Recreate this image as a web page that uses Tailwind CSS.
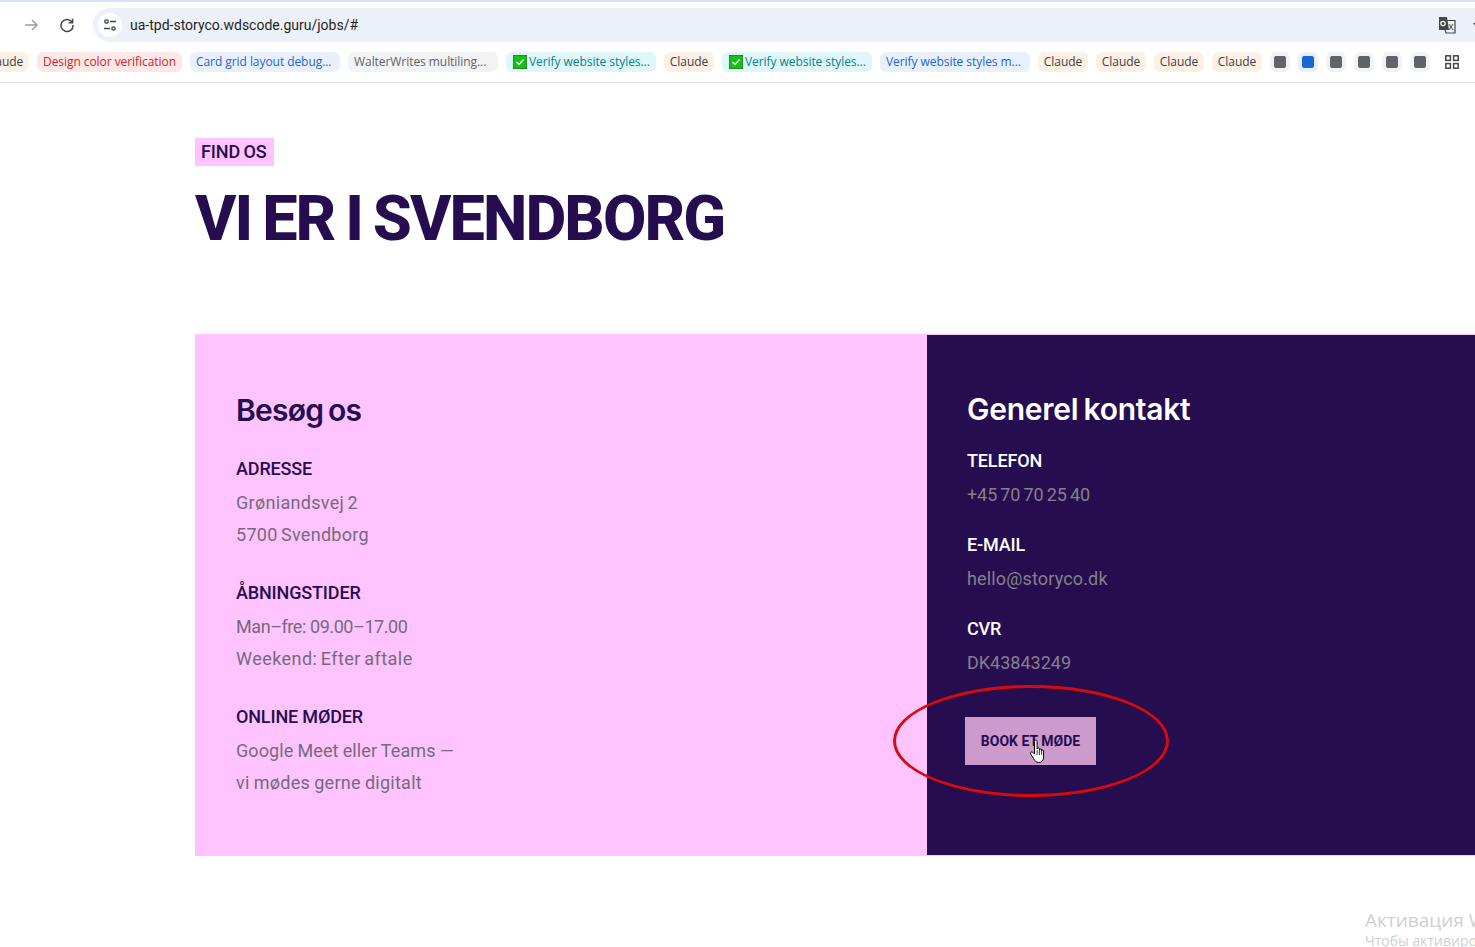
<!DOCTYPE html>
<html lang="en">
<head>
  <meta charset="UTF-8">
  <title>Find os</title>
  <script src="https://cdn.jsdelivr.net/npm/@tailwindcss/browser@4"></script>
</head>
<body class="relative h-[947px] overflow-hidden bg-white font-['Inter',sans-serif]">

  <!-- Browser toolbar -->
  <div class="h-[2px] bg-[#d3e3fd]"></div>
  <div class="flex h-[41px] items-center pl-[23px] pt-[5px]">
    <svg class="w-4 h-4 mr-[20px]" viewBox="0 0 16 16" fill="none" stroke="#9aa0a6" stroke-width="1.5"><path d="M2 8h12M9 3l5 5-5 5"/></svg>
    <svg class="w-4 h-4 mr-[18px]" viewBox="0 0 16 16" fill="none" stroke="#474747" stroke-width="1.5"><path d="M13.2 5.5A6 6 0 1 0 14 8M13.6 1.8v4h-4"/></svg>
    <div class="flex flex-1 h-[34px] items-center rounded-l-full bg-[#ecf1f9] pl-[5px]">
      <div class="flex w-6 h-6 items-center justify-center rounded-full bg-white">
        <svg class="w-[14px] h-[14px]" viewBox="0 0 14 14" fill="none" stroke="#474747" stroke-width="1.3"><circle cx="3.5" cy="3.5" r="1.7"/><path d="M7 3.5h6M1 10.5h6"/><circle cx="10.5" cy="10.5" r="1.7"/></svg>
      </div>
      <span class="ml-2 font-['Roboto',sans-serif] text-[14px] text-[#1f1f1f]">ua-tpd-storyco.wdscode.guru/jobs/#</span>
      <svg class="ml-auto mr-[17px] w-[18px] h-[18px]" viewBox="0 0 18 18"><path d="M1 1h8l2 13H1z" fill="#474747"/><path d="M9 4.5h8V17H8l-1-3" fill="none" stroke="#474747" stroke-width="1.2"/><path d="M11 8l4 6M15 8l-4 6" stroke="#474747" stroke-width="1"/><circle cx="5" cy="7.5" r="2.2" fill="none" stroke="#fff" stroke-width="1.2"/></svg>
      <span class="w-0 h-0 mr-[-6px] border-x-[4px] border-t-[5px] border-x-transparent border-t-[#474747]"></span>
    </div>
  </div>

  <!-- Bookmarks -->
  <div class="flex h-[40px] items-center gap-2 border-b border-[#e2e2e2] pb-[1px] -ml-[21px] font-['Open_Sans',sans-serif] text-[12px] tracking-[-0.06px] whitespace-nowrap">
    <span class="flex h-5 w-[50px] shrink-0 items-center justify-center rounded-md bg-[#fdf0e5] text-[#3d3d47]">Claude</span>
    <span class="flex h-5 w-[145px] shrink-0 items-center rounded-md bg-[#fde8e8] pl-[6px] text-[#d6202a]">Design color verification</span>
    <span class="flex h-5 w-[150px] shrink-0 items-center rounded-md bg-[#e8f0fe] pl-[6px] text-[#2563d9]">Card grid layout debug...</span>
    <span class="flex h-5 w-[150px] shrink-0 items-center rounded-md bg-[#f1f3f4] pl-[6px] text-[#5f6368]">WalterWrites multiling...</span>
    <span class="flex h-5 w-[150px] shrink-0 items-center rounded-md bg-[#e0f7fa] pl-[7px] text-[#00838f]"><svg class="w-[14px] h-[14px] mr-[2px] shrink-0" viewBox="0 0 14 14"><rect width="14" height="14" fill="#12c30f" stroke="#3b5a3b"/><path d="M3.5 7l2.5 2.5 4.5-5" fill="none" stroke="#fff" stroke-width="1.4"/></svg>Verify website styles...</span>
    <span class="flex h-5 w-[50px] shrink-0 items-center justify-center rounded-md bg-[#fdf0e5] text-[#3d3d47]">Claude</span>
    <span class="flex h-5 w-[150px] shrink-0 items-center rounded-md bg-[#e0f7fa] pl-[7px] text-[#00838f]"><svg class="w-[14px] h-[14px] mr-[2px] shrink-0" viewBox="0 0 14 14"><rect width="14" height="14" fill="#12c30f" stroke="#3b5a3b"/><path d="M3.5 7l2.5 2.5 4.5-5" fill="none" stroke="#fff" stroke-width="1.4"/></svg>Verify website styles...</span>
    <span class="flex h-5 w-[150px] shrink-0 items-center rounded-md bg-[#e8f0fe] pl-[6px] text-[#2563d9]">Verify website styles m...</span>
    <span class="flex h-5 w-[50px] shrink-0 items-center justify-center rounded-md bg-[#fdf0e5] text-[#3d3d47]">Claude</span>
    <span class="flex h-5 w-[50px] shrink-0 items-center justify-center rounded-md bg-[#fdf0e5] text-[#3d3d47]">Claude</span>
    <span class="flex h-5 w-[50px] shrink-0 items-center justify-center rounded-md bg-[#fdf0e5] text-[#3d3d47]">Claude</span>
    <span class="flex h-5 w-[50px] shrink-0 items-center justify-center rounded-md bg-[#fdf0e5] text-[#3d3d47]">Claude</span>
    <span class="flex h-5 w-5 shrink-0 items-center justify-center rounded-md bg-[#f1f3f4]"><span class="h-3 w-3 rounded-[2px] bg-[#5f6368]"></span></span>
    <span class="flex h-5 w-5 shrink-0 items-center justify-center rounded-md bg-[#e8f0fe]"><span class="h-3 w-3 rounded-[2px] bg-[#1967d2]"></span></span>
    <span class="flex h-5 w-5 shrink-0 items-center justify-center rounded-md bg-[#f1f3f4]"><span class="h-3 w-3 rounded-[2px] bg-[#5f6368]"></span></span>
    <span class="flex h-5 w-5 shrink-0 items-center justify-center rounded-md bg-[#f1f3f4]"><span class="h-3 w-3 rounded-[2px] bg-[#5f6368]"></span></span>
    <span class="flex h-5 w-5 shrink-0 items-center justify-center rounded-md bg-[#f1f3f4]"><span class="h-3 w-3 rounded-[2px] bg-[#5f6368]"></span></span>
    <span class="flex h-5 w-5 shrink-0 items-center justify-center rounded-md bg-[#f1f3f4]"><span class="h-3 w-3 rounded-[2px] bg-[#5f6368]"></span></span>
    <svg class="ml-[7px] w-[14px] h-[14px] shrink-0" viewBox="0 0 14 14" fill="none" stroke="#474747" stroke-width="1.5"><rect x=".8" y=".8" width="4.6" height="4.6"/><rect x="8.6" y=".8" width="4.6" height="4.6"/><rect x=".8" y="8.6" width="4.6" height="4.6"/><rect x="8.6" y="8.6" width="4.6" height="4.6"/></svg>
  </div>

  <!-- Page content -->
  <main class="pl-[195px] pt-[55px]">
    <span class="block w-[79px] h-[28px] bg-[#ffc4ff] pl-[6px] font-['Roboto',sans-serif] text-[18px] leading-[28px] font-medium tracking-[-0.1px] [word-spacing:-1px] whitespace-nowrap text-[#250d4f]">FIND OS</span>
    <h1 class="mt-[18px] font-['Roboto',sans-serif] text-[63px] leading-[70px] font-extrabold tracking-[-1.9px] [word-spacing:-3px] text-[#250d4f]">VI ER I SVENDBORG</h1>

    <div class="mt-[80px] grid h-[522px] grid-cols-[732px_1fr] font-['Roboto',sans-serif]">
      <section class="bg-[#ffc4ff] pl-[41px] pt-[56px] text-[#250d4f]">
        <h2 class="font-['Inter',sans-serif] text-[30px] leading-[40px] font-semibold tracking-[-0.75px] [word-spacing:-2px]">Besøg os</h2>
        <h3 class="mt-[23px] text-[18px] leading-[32px] font-medium tracking-[-0.15px]">ADRESSE</h3>
        <div class="mt-[2px] text-[18px] leading-[32px] text-[#736b7c] tracking-[0.3px] [word-spacing:-1.5px]">
          <p>Grøniandsvej 2</p>
          <p>5700 Svendborg</p>
        </div>
        <h3 class="mt-[26px] text-[18px] leading-[32px] font-medium tracking-[-0.15px]">ÅBNINGSTIDER</h3>
        <div class="mt-[2px] text-[18px] leading-[32px] text-[#736b7c] tracking-[0.3px] [word-spacing:-1.5px]">
          <p class="tracking-[-0.43px] [word-spacing:0px]">Man–fre: 09.00–17.00</p>
          <p class="tracking-[0.45px]">Weekend: Efter aftale</p>
        </div>
        <h3 class="mt-[26px] text-[18px] leading-[32px] font-medium tracking-[-0.15px]">ONLINE MØDER</h3>
        <div class="mt-[2px] text-[18px] leading-[32px] text-[#736b7c] tracking-[0.1px] [word-spacing:-0.5px]">
          <p>Google Meet eller Teams —</p>
          <p class="tracking-[0.25px]">vi mødes gerne digitalt</p>
        </div>
      </section>
      <section class="border-y border-[#ffc4ff] bg-[#250d4f] pl-[40px] pt-[54px] text-white">
        <h2 class="font-['Inter',sans-serif] text-[30px] leading-[40px] font-semibold tracking-[-0.27px] [word-spacing:-2px]">Generel kontakt</h2>
        <h3 class="mt-[16px] text-[18px] leading-[32px] font-medium tracking-[-0.15px]">TELEFON</h3>
        <p class="mt-[2px] text-[18px] leading-[32px] text-[#85808c] tracking-[-0.1px] [word-spacing:-1.2px]">+45 70 70 25 40</p>
        <h3 class="mt-[18px] text-[18px] leading-[32px] font-medium tracking-[-0.15px]">E-MAIL</h3>
        <p class="mt-[2px] text-[18px] leading-[32px] text-[#85808c] tracking-[0.15px]">hello@storyco.dk</p>
        <h3 class="mt-[18px] text-[18px] leading-[32px] font-medium tracking-[-0.15px]">CVR</h3>
        <p class="mt-[2px] text-[18px] leading-[32px] text-[#85808c]">DK43843249</p>
        <button class="mt-[38px] -ml-[2px] h-[48px] w-[131px] bg-[#cc9bcc] text-[14px] font-bold text-[#250d4f]">BOOK ET MØDE</button>
      </section>
    </div>
  </main>

  <!-- Red annotation and cursor drawn over the page -->
  <div class="absolute left-[893px] top-[685px] h-[112px] w-[276px] rounded-[50%] border-[3px] border-[#d90a0a]"></div>
  <svg class="absolute left-[1029px] top-[739px] w-[19px] h-[25px]" viewBox="0 0 18 25"><path d="M5 2.5c0-2 2.6-2 2.6 0V10c0-1.6 2.3-1.6 2.3 0v1c0-1.5 2.2-1.5 2.2 0v1c0-1.4 2-1.4 2 0v6c0 3-1.6 5.5-4.5 5.5H9c-2.5 0-3.5-1.5-5-4L1.2 15c-1-1.6 1-3 2.2-1.6L5 15z" fill="#fff" stroke="#000" stroke-width="1"/><path d="M7.6 11v5M9.9 11v5M12.1 12v4" stroke="#000" stroke-width=".8"/></svg>

  <!-- Windows activation watermark -->
  <div class="absolute left-[1365px] top-[908px] whitespace-nowrap font-['Open_Sans',sans-serif] text-[#cfcfcf]">
    <p class="text-[19px] leading-[24px]">Активация Windows</p>
    <p class="text-[14px] leading-[18px]">Чтобы активировать Windows</p>
  </div>
</body>
</html>
